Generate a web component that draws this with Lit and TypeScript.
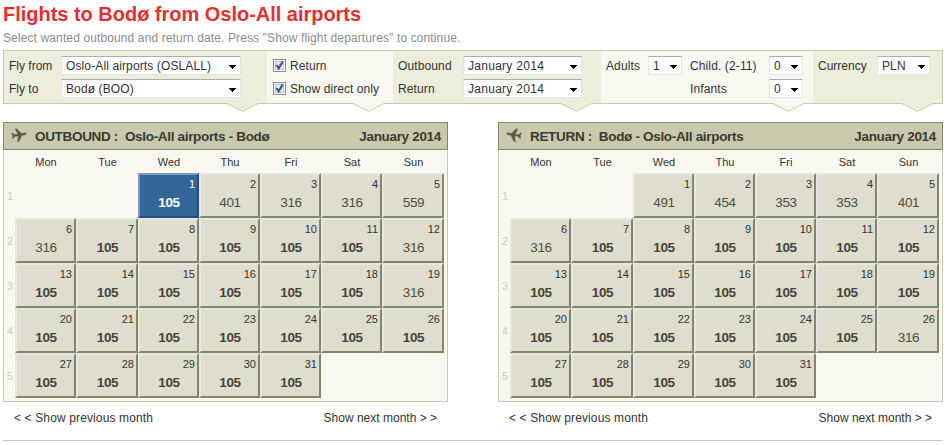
/**
 * <app-root> — Low fare calendar: search bar on top, one month panel for each
 * direction below.
 */

import { LitElement, html, css, svg, nothing } from "lit";
import { customElement, property, state } from "lit/decorators.js";
import { classMap } from "lit/directives/class-map.js";

const WEEKDAYS = ["Mon", "Tue", "Wed", "Thu", "Fri", "Sat", "Sun"];

/* Both months start on a Wednesday */
const LEADING_BLANKS = 2;
const LOW_FARE = 105;

function buildFares(exceptions: Record<number, number>): number[] {
  return Array.from({ length: 31 }, (_, i) => exceptions[i + 1] ?? LOW_FARE);
}

const OUTBOUND = buildFares({ 2: 401, 3: 316, 4: 316, 5: 559, 6: 316, 12: 316, 19: 316 });
const RETURN = buildFares({ 1: 491, 2: 454, 3: 353, 4: 353, 5: 401, 6: 316, 26: 316 });

/* ── Select box ──────────────────────────────────────────────────────── */

@customElement("fare-select")
export class FareSelect extends LitElement {
  @property() value = "";

  static styles = css`
    :host {
      display: flex;
      box-sizing: border-box;
      align-items: center;
      justify-content: space-between;
      height: 19px;
      padding: 0 4px;
      background: #fff;
      border: 1px solid #e2e3ea;
      border-top-color: #abadb3;
      color: #333;
      letter-spacing: 0.12px;
      white-space: nowrap;
    }

    .arrow {
      display: block;
      margin-top: 2px;
      fill: #000;
    }
  `;

  render() {
    return html`
      <span>${this.value}</span>
      <svg class="arrow" width="7" height="4" viewBox="0 0 7 4" shape-rendering="crispEdges">
        <path d="M0 0h7v1h-1v1h-1v1h-1v1h-1v-1h-1v-1h-1v-1h-1z" />
      </svg>
    `;
  }
}

/* ── Checkbox ────────────────────────────────────────────────────────── */

@customElement("fare-check")
export class FareCheck extends LitElement {
  @property() label = "";
  @property({ type: Boolean }) checked = false;

  static styles = css`
    :host {
      display: flex;
      align-items: center;
      gap: 4px;
      height: 19px;
      letter-spacing: 0.07px;
      white-space: nowrap;
      cursor: default;
    }

    .box {
      display: block;
    }
  `;

  private _toggle(): void {
    this.checked = !this.checked;
  }

  render() {
    return html`
      <svg class="box" width="13" height="13" viewBox="0 0 13 13" @click=${this._toggle}>
        <rect x=".5" y=".5" width="12" height="12" fill="#f4f4f4" stroke="#8e8f8f" />
        <rect x="2.5" y="2.5" width="8" height="8" fill="#e6e9ee" stroke="#c3c8d0" />
        ${this.checked
          ? svg`<path d="M3.4 6l2.3 3.4L9.8 2.4" fill="none" stroke="#3f5597" stroke-width="2.1" />`
          : nothing}
      </svg>
      <span>${this.label}</span>
    `;
  }
}

/* ── Month panel ─────────────────────────────────────────────────────── */

@customElement("fare-month")
export class FareMonth extends LitElement {
  @property() direction = "";
  @property() route = "";
  @property() month = "";
  @property({ type: Array }) fares: number[] = [];
  @property({ type: Boolean }) inbound = false;
  @property({ type: Number }) selected = 0;

  static styles = css`
    :host {
      display: block;
      width: 445px;
    }

    .header {
      display: flex;
      box-sizing: border-box;
      align-items: center;
      height: 28px;
      padding: 0 6px 0 7px;
      background: #c9c9ae;
      border: 1px solid #84866a;
      color: #3b3a2e;
      font-size: 13.5px;
      font-weight: bold;
      letter-spacing: -0.32px;
      white-space: pre;
    }

    .plane {
      width: 16px;
      height: 16px;
      margin: 0 8px 2px 0;
      fill: #5b5a48;
      stroke: #5b5a48;
      stroke-width: 0.3;
      transform: rotate(-8deg);
    }

    .plane.inbound {
      transform: scaleX(-1) rotate(-8deg);
    }

    .month {
      margin-left: auto;
    }

    .body {
      display: grid;
      box-sizing: border-box;
      grid-template-columns: 11px 61px 62px 61px 61px 61px 61px 62px;
      grid-template-rows: 23px repeat(5, 45px);
      height: 252px;
      background: #f8f8f1;
      border: 1px solid #c9c9ae;
      border-top: 0;
    }

    .weekday {
      padding-left: 1px;
      font-size: 11px;
      line-height: 24px;
      text-align: center;
    }

    .week {
      grid-column: 1;
      align-self: center;
      padding-left: 1px;
      color: #ccccc4;
      font-size: 11px;
      text-align: center;
    }

    .day {
      box-sizing: border-box;
      padding: 2px 2px 0 0;
      background: #deddce;
      border: 2px solid;
      border-color: #e7e7e1 #84866a #84866a #e7e7e1;
      font-size: 11px;
      line-height: 15px;
      text-align: right;
      cursor: pointer;
    }

    .price {
      display: block;
      padding: 2px 0 0 3px;
      color: #4f4e40;
      font-size: 13.5px;
      letter-spacing: -0.3px;
      line-height: 17px;
      text-align: center;
    }

    .low .price {
      color: #45443a;
      font-weight: bold;
    }

    .day.selected {
      background: #336699;
      border-color: #7a9ab8 #264d80 #264d80 #7a9ab8;
      color: #fff;
    }

    .selected .price {
      color: #fff;
    }

    .pager {
      display: flex;
      justify-content: space-between;
      padding: 9px 11px 0;
      font-size: 12px;
      line-height: 15px;
    }

    .previous {
      letter-spacing: 0.13px;
    }
  `;

  private _select(day: number): void {
    this.selected = day;
  }

  private _renderDay(day: number) {
    const fare = this.fares[day - 1];
    if (fare === undefined) return nothing;
    const classes = { day: true, low: fare === LOW_FARE, selected: day === this.selected };
    return html`
      <div class=${classMap(classes)} @click=${() => this._select(day)}>
        ${day}<span class="price">${fare}</span>
      </div>
    `;
  }

  private _renderWeek(week: number) {
    return html`
      <div class="week">${week + 1}</div>
      ${WEEKDAYS.map((_, i) => {
        const day = week * 7 + i + 1 - LEADING_BLANKS;
        return day < 1 ? html`<div></div>` : this._renderDay(day);
      })}
    `;
  }

  render() {
    return html`
      <div class="header">
        <svg class=${classMap({ plane: true, inbound: this.inbound })} viewBox="0 0 16 16">
          <path
            d="M15.6 7.8c0-.8-1-1.2-2-1.1L10.6 6.8 6.6 1.4 4.9 1.5 7 6.9 3.7 7.2 1.8 5.2.7 5.3 1.6 7.9.9 10.6l1.1-.1 1.8-1.9L7.2 8.8 5.6 14.4l1.7-.1L10.9 8.8l3-.2c1-.1 1.7-.3 1.7-.8z"
          />
        </svg>
        <span>${this.direction} :  ${this.route}</span>
        <span class="month">${this.month}</span>
      </div>
      <div class="body">
        <div></div>
        ${WEEKDAYS.map((name) => html`<div class="weekday">${name}</div>`)}
        ${[0, 1, 2, 3, 4].map((week) => this._renderWeek(week))}
      </div>
      <div class="pager">
        <span class="previous">&lt; &lt; Show previous month</span>
        <span>Show next month &gt; &gt;</span>
      </div>
    `;
  }
}

/* ── Page ────────────────────────────────────────────────────────────── */

@customElement("app-root")
export class AppRoot extends LitElement {
  @state() private _month = "January 2014";

  static styles = css`
    :host {
      display: block;
      box-sizing: border-box;
      width: 948px;
      height: 445px;
      padding: 2px 5px 0 3px;
      overflow: hidden;
      background: #fff;
      color: #333;
      font-family: "Liberation Sans", Arial, sans-serif;
      font-size: 12px;
    }

    h1 {
      margin: 0;
      color: #e22f32;
      font-size: 20px;
      letter-spacing: -0.02px;
      line-height: 24px;
    }

    .intro {
      margin: 0;
      height: 24px;
      color: #8c8c8c;
      letter-spacing: 0.12px;
      line-height: 24px;
    }

    .search {
      display: flex;
      box-sizing: border-box;
      height: 54px;
      border: 1px solid #c9c9ae;
    }

    .segment {
      position: relative;
      display: grid;
      box-sizing: border-box;
      grid-template-rows: 19px 19px;
      row-gap: 4px;
      align-items: center;
      padding: 5px 0 0 5px;
      background: #ecedda;
    }

    .segment.light {
      background: #f8f8f1;
    }

    .places {
      grid-template-columns: 52px 180px;
      width: 263px;
    }

    .options {
      width: 126px;
      padding-left: 6px;
    }

    .dates {
      grid-template-columns: 65px 119px;
      width: 208px;
      letter-spacing: 0.12px;
    }

    .dates fare-select {
      letter-spacing: 0.28px;
    }

    .travellers {
      grid-template-columns: 42px 34px 8px 79px 34px;
      width: 212px;
      letter-spacing: 0.12px;
    }

    .currency {
      grid-template-columns: 59px 53px;
      width: 129px;
    }

    .child {
      grid-column: 4;
    }

    /* Tab hanging below the bar */
    .notch {
      position: absolute;
      right: 9px;
      top: 52px;
      fill: #ecedda;
      stroke: #c9c9ae;
    }

    .light .notch {
      fill: #f8f8f1;
    }

    .months {
      display: flex;
      justify-content: space-between;
      height: 318px;
      margin-top: 18px;
      border-bottom: 1px solid #c9c9ae;
    }
  `;

  private _renderNotch() {
    return html`
      <svg class="notch" width="31" height="9" viewBox="0 0 31 9">
        <path d="M0 .5L15.5 8.3 31 .5V0H0z" stroke="none" />
        <path d="M0 .5L15.5 8.3 31 .5" fill="none" />
      </svg>
    `;
  }

  render() {
    return html`
      <h1>Flights to Bodø from Oslo-All airports</h1>
      <p class="intro">
        Select wanted outbound and return date. Press "Show flight departures" to continue.
      </p>
      <div class="search">
        <div class="segment places">
          <span>Fly from</span>
          <fare-select value="Oslo-All airports (OSLALL)"></fare-select>
          <span>Fly to</span>
          <fare-select value="Bodø (BOO)"></fare-select>
          ${this._renderNotch()}
        </div>
        <div class="segment light options">
          <fare-check label="Return" checked></fare-check>
          <fare-check label="Show direct only" checked></fare-check>
          ${this._renderNotch()}
        </div>
        <div class="segment dates">
          <span>Outbound</span>
          <fare-select value=${this._month}></fare-select>
          <span>Return</span>
          <fare-select value=${this._month}></fare-select>
          ${this._renderNotch()}
        </div>
        <div class="segment light travellers">
          <span>Adults</span>
          <fare-select value="1"></fare-select>
          <span class="child">Child. (2-11)</span>
          <fare-select value="0"></fare-select>
          <span class="child">Infants</span>
          <fare-select value="0"></fare-select>
          ${this._renderNotch()}
        </div>
        <div class="segment currency">
          <span>Currency</span>
          <fare-select value="PLN"></fare-select>
          ${this._renderNotch()}
        </div>
      </div>
      <div class="months">
        <fare-month
          direction="OUTBOUND"
          route="Oslo-All airports - Bodø"
          .month=${this._month}
          .fares=${OUTBOUND}
          .selected=${1}
        ></fare-month>
        <fare-month
          direction="RETURN"
          route="Bodø - Oslo-All airports"
          .month=${this._month}
          .fares=${RETURN}
          inbound
        ></fare-month>
      </div>
    `;
  }
}

declare global {
  interface HTMLElementTagNameMap {
    "app-root": AppRoot;
    "fare-select": FareSelect;
    "fare-check": FareCheck;
    "fare-month": FareMonth;
  }
}
